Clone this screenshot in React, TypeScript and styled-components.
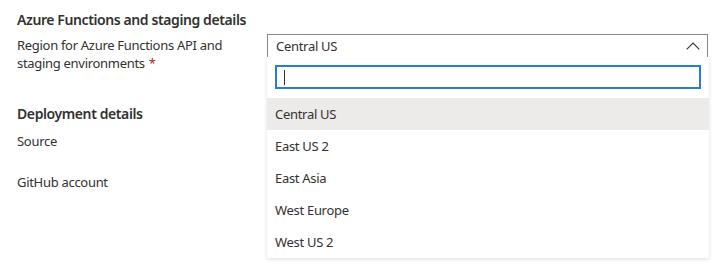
import styled, { createGlobalStyle } from 'styled-components';

const GlobalStyle = createGlobalStyle`
  body {
    margin: 0;
    background: #ffffff;
    font-family: "Noto Sans", "Open Sans", sans-serif;
    color: #323130;
    letter-spacing: -0.3px;
  }
`;

const Page = styled.main`
  padding: 10px 15px 0 17px;
  width: 723px;
  height: 274px;
  box-sizing: border-box;
  overflow: hidden;
`;

const SectionTitle = styled.h2<{ $top?: number }>`
  margin: ${p => p.$top ?? 0}px 0 0;
  font-size: 14px;
  font-weight: 600;
  line-height: 20px;
  letter-spacing: -0.4px;
  color: #323130;
`;

const FieldRow = styled.div<{ $gap?: number }>`
  display: grid;
  grid-template-columns: 250px 441px;
  margin-top: ${p => p.$gap ?? 0}px;
`;

const Label = styled.label`
  font-size: 13px;
  line-height: 18px;
  padding-top: 2px;
  color: #323130;
`;

const Required = styled.span`
  color: #a4262c;
  padding-left: 4px;
`;

const ComboWrap = styled.div`
  position: relative;
`;

const Combo = styled.div`
  height: 24px;
  box-sizing: border-box;
  border: 1px solid #8a8886;
  display: flex;
  align-items: center;
  justify-content: space-between;
  padding: 0 7px 0 8px;
  font-size: 13px;
  color: #323130;
`;

const Panel = styled.div`
  position: absolute;
  top: 23px;
  left: 0;
  width: 442px;
  background: #ffffff;
  box-shadow: 0 1.6px 3.6px rgba(0, 0, 0, 0.13), 0 0.3px 0.9px rgba(0, 0, 0, 0.11);
  z-index: 10;
`;

const SearchBox = styled.div`
  padding: 8px 8px 9px;
`;

const SearchInput = styled.div`
  height: 24px;
  box-sizing: border-box;
  border: 2px solid #2b7bd6;
  display: flex;
  align-items: center;
  padding-left: 7px;
`;

const Caret = styled.span`
  width: 1px;
  height: 15px;
  background: #323130;
`;

const Option = styled.div<{ $selected?: boolean }>`
  height: 32px;
  display: flex;
  align-items: center;
  padding-left: 8px;
  font-size: 13px;
  color: #323130;
  background: ${p => (p.$selected ? '#edebe9' : 'transparent')};
`;

const regions = ['Central US', 'East US 2', 'East Asia', 'West Europe', 'West US 2'];

function ChevronUp() {
  return (
    <svg width="14" height="8" viewBox="0 0 14 8">
      <path d="M0.7 7.3 L7 1 L13.3 7.3" fill="none" stroke="#323130" strokeWidth="1.1" />
    </svg>
  );
}

export default function App() {
  return (
    <>
      <GlobalStyle />
      <Page>
        <SectionTitle>Azure Functions and staging details</SectionTitle>
        <FieldRow $gap={4}>
          <Label>
            Region for Azure Functions API and staging environments<Required>*</Required>
          </Label>
          <ComboWrap>
            <Combo>
              <span>Central US</span>
              <ChevronUp />
            </Combo>
            <Panel>
              <SearchBox>
                <SearchInput>
                  <Caret />
                </SearchInput>
              </SearchBox>
              {regions.map((r, i) => (
                <Option key={r} $selected={i === 0}>{r}</Option>
              ))}
            </Panel>
          </ComboWrap>
        </FieldRow>
        <SectionTitle $top={32}>Deployment details</SectionTitle>
        <FieldRow $gap={6}>
          <Label>Source</Label>
        </FieldRow>
        <FieldRow $gap={21}>
          <Label>GitHub account</Label>
        </FieldRow>
      </Page>
    </>
  );
}
